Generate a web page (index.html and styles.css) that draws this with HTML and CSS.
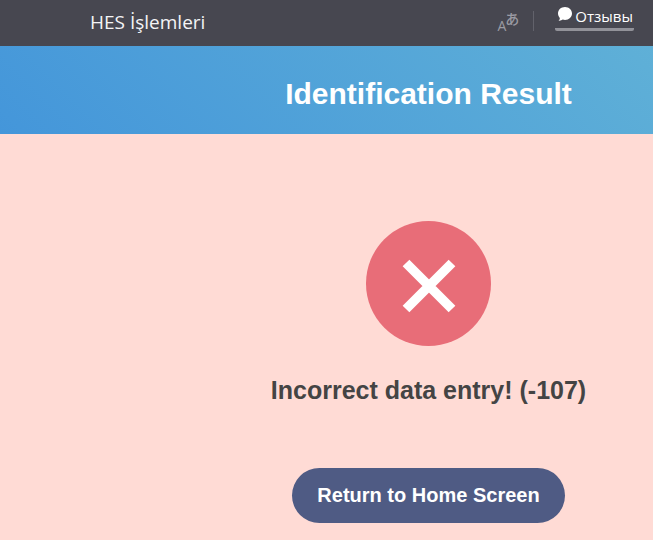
FILE: index.html
```html
<!DOCTYPE html>
<html lang="en">
<head>
  <meta charset="UTF-8">
  <meta name="viewport" content="width=device-width, initial-scale=1.0">
  <title>HES İşlemleri</title>
  <link rel="stylesheet" href="styles.css">
</head>
<body>
  <header class="topbar">
    <span class="app-name" lang="tr">HES İşlemleri</span>
    <div class="tools">
      <button type="button" class="translate">
        <span>A</span><span class="kana" lang="ja">あ</span>
      </button>
      <span class="divider"></span>
      <a href="#" class="reviews" lang="ru">
        <svg class="bubble" width="16" height="16" viewBox="0 0 16 16">
          <path d="M8 1C4 1 1 3.800 1 7.500c0 1.900.9 3.400 1.800 4.400C2.900 13 2.500 14 1.500 14.700c1.800.2 3.200-.2 4.300-1.100.7.200 1.400.3 2.200.3 4 0 7-2.800 7-6.400S12 1 8 1z" fill="#fff"/>
        </svg>
        <span>Отзывы</span>
      </a>
    </div>
  </header>

  <div class="banner">
    <h1>Identification Result</h1>
  </div>

  <main class="result">
    <svg class="error-icon" width="125" height="125" viewBox="0 0 125 125">
      <circle cx="62.500" cy="62.500" r="62.500" fill="#e86d78"/>
      <path d="M40 42L86 88M86 42L40 88" stroke="#fff" stroke-width="9.500" fill="none"/>
    </svg>
    <h2>Incorrect data entry! (-107)</h2>
    <button type="button" class="home-button">Return to Home Screen</button>
  </main>
</body>
</html>
```

FILE: styles.css
```css
* {
  box-sizing: border-box;
}

body {
  margin: 0;
  min-height: 100vh;
  font-family: "Liberation Sans", Arial, sans-serif;
  background-color: #ffdbd5;
}

.topbar {
  display: flex;
  justify-content: space-between;
  height: 46px;
  padding: 0 19px 0 90px;
  background-color: #474750;
  color: #fff;
  font-family: "Open Sans", "Noto Sans", sans-serif;
}

.app-name {
  font-size: 19px;
  line-height: 44px;
  color: #f4f4f6;
}

.tools {
  display: flex;
  align-items: flex-start;
}

.translate {
  display: flex;
  margin: 11px 14px 0 0;
  padding: 0;
  border: none;
  background: none;
  color: #9b9ba3;
  font-family: "Open Sans", "Noto Sans CJK JP", sans-serif;
  font-size: 14px;
  line-height: 30px;
  cursor: pointer;
}

.kana {
  margin-left: -1px;
  font-weight: 500;
  line-height: 16px;
}

.divider {
  width: 1px;
  height: 20px;
  margin: 11px 21px 0 0;
  background-color: #62626b;
}

.reviews {
  display: flex;
  padding: 6px 1px 2px 2px;
  border-bottom: 3px solid #929299;
  border-radius: 2px;
  color: #fff;
  font-size: 15px;
  line-height: 20px;
  text-decoration: none;
}

.bubble {
  margin-right: 2px;
}

.banner {
  padding: 31px 0 23px 204px;
  background: linear-gradient(45deg, #4496da, #5fb0d7);
  color: #fff;
  text-align: center;
}

h1 {
  margin: 0;
  font-size: 30px;
  line-height: 34px;
}

.result {
  display: flex;
  flex-direction: column;
  align-items: center;
  padding: 87px 0 17px 204px;
}

h2 {
  margin: 30px 0 64px;
  font-size: 25px;
  line-height: 28px;
  color: #444;
}

.home-button {
  height: 55px;
  padding: 0 25px;
  border: none;
  border-radius: 28px;
  background-color: #4f5b84;
  color: #fff;
  font-family: inherit;
  font-size: 20px;
  font-weight: bold;
  cursor: pointer;
}
```
